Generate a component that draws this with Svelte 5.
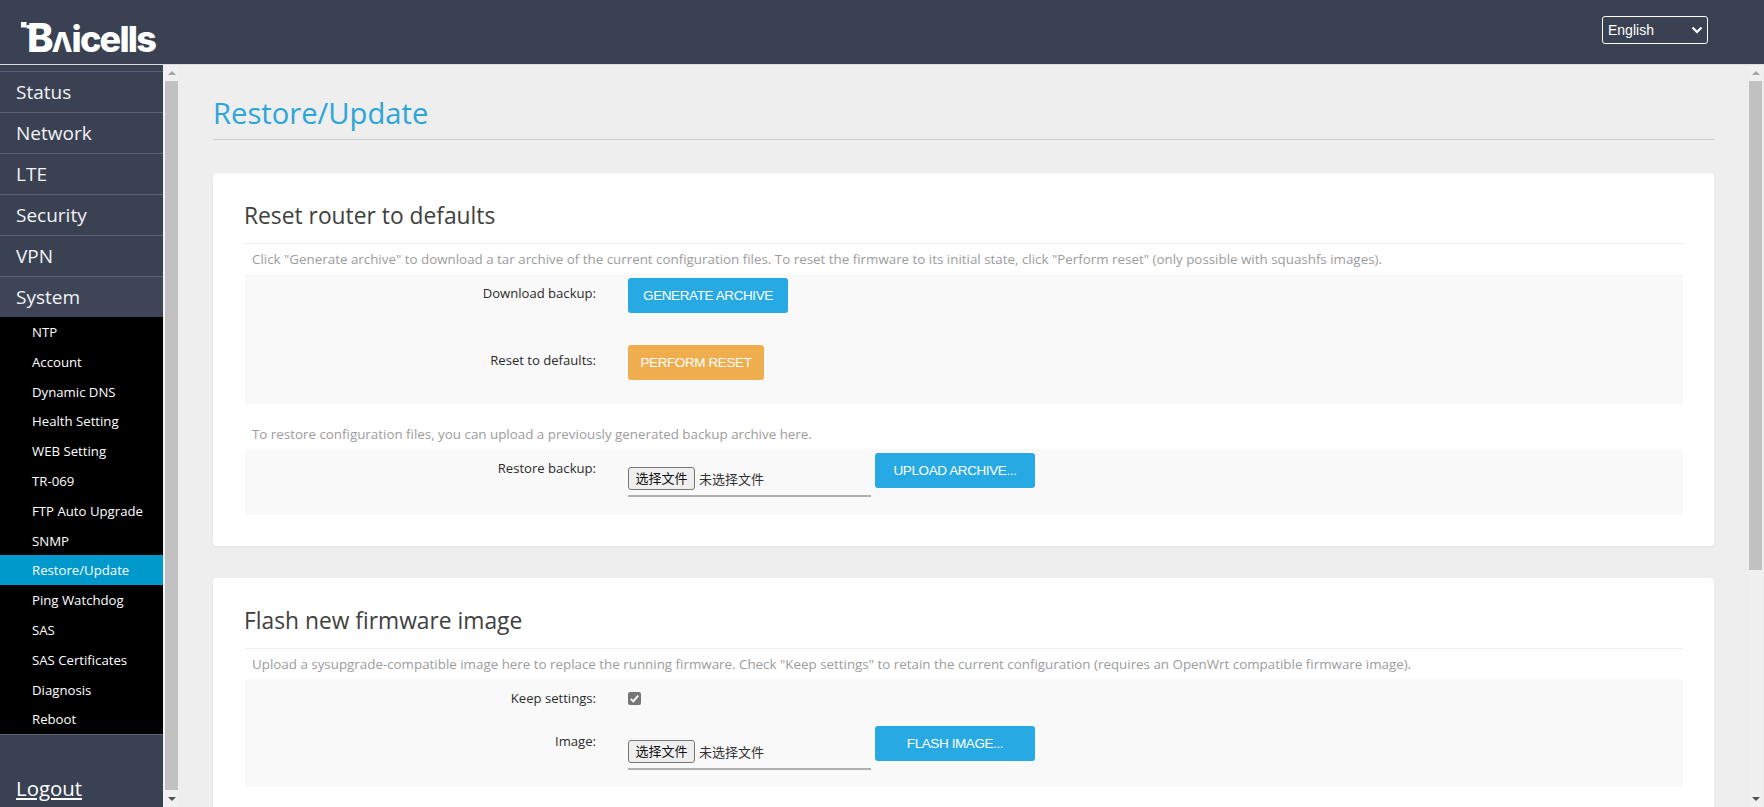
<script>
	const mainNav = ['Status', 'Network', 'LTE', 'Security', 'VPN', 'System']
	const subNav = [
		'NTP',
		'Account',
		'Dynamic DNS',
		'Health Setting',
		'WEB Setting',
		'TR-069',
		'FTP Auto Upgrade',
		'SNMP',
		'Restore/Update',
		'Ping Watchdog',
		'SAS',
		'SAS Certificates',
		'Diagnosis',
		'Reboot'
	]
</script>

<div class="page">
	<header>
		<div class="logo">
			<svg class="logo-dots" width="10" height="7" viewBox="0 0 10 7" aria-hidden="true">
				<rect x="0" y="0" width="5.5" height="5.5" />
				<rect x="5.5" y="3" width="4" height="3.5" />
			</svg>
			<span><span class="logo-b">B</span><span class="logo-a">Λ</span>icells</span>
		</div>
		<div class="lang">
			<span>English</span>
			<svg width="12" height="8" viewBox="0 0 12 8" aria-hidden="true">
				<path d="M1.5 1.5 6 6l4.5-4.5" fill="none" stroke="#fff" stroke-width="2.2" />
			</svg>
		</div>
	</header>

	<div class="body">
		<aside>
			<nav>
				{#each mainNav as item}
					<a href="#top" class="top" class:open={item === 'System'}>{item}</a>
				{/each}
				<div class="sub">
					{#each subNav as item}
						<a href="#top" class:active={item === 'Restore/Update'}>{item}</a>
					{/each}
				</div>
			</nav>
			<a href="#top" class="logout">Logout</a>
		</aside>
		<div class="gutter"></div>
		<div class="scrollbar">
			<span class="up"></span>
			<span class="thumb side"></span>
			<span class="down"></span>
		</div>

		<main>
			<h1>Restore/Update</h1>

			<section class="card first">
				<h2>Reset router to defaults</h2>
				<p class="desc">Click "Generate archive" to download a tar archive of the current configuration files. To reset the firmware to its initial state, click "Perform reset" (only possible with squashfs images).</p>
				<div class="fields tall">
					<div class="row spaced">
						<span class="label">Download backup:</span>
						<button class="btn blue wide">GENERATE ARCHIVE</button>
					</div>
					<div class="row">
						<span class="label">Reset to defaults:</span>
						<button class="btn orange">PERFORM RESET</button>
					</div>
				</div>
				<p class="desc second">To restore configuration files, you can upload a previously generated backup archive here.</p>
				<div class="fields">
					<div class="row">
						<span class="label">Restore backup:</span>
						<div class="file">
							<span class="file-btn">选择文件</span>
							<span class="file-name">未选择文件</span>
						</div>
						<button class="btn blue wide after-file">UPLOAD ARCHIVE...</button>
					</div>
				</div>
			</section>

			<section class="card">
				<h2>Flash new firmware image</h2>
				<p class="desc">Upload a sysupgrade-compatible image here to replace the running firmware. Check "Keep settings" to retain the current configuration (requires an OpenWrt compatible firmware image).</p>
				<div class="fields flash">
					<div class="row check-row">
						<span class="label">Keep settings:</span>
						<span class="check">
							<svg width="13" height="13" viewBox="0 0 13 13" aria-hidden="true">
								<path d="M2.8 6.8 5.3 9.3 10.2 3.6" fill="none" stroke="#fff" stroke-width="1.9" />
							</svg>
						</span>
					</div>
					<div class="row">
						<span class="label">Image:</span>
						<div class="file">
							<span class="file-btn">选择文件</span>
							<span class="file-name">未选择文件</span>
						</div>
						<button class="btn blue wide after-file">FLASH IMAGE...</button>
					</div>
				</div>
			</section>
		</main>

		<div class="scrollbar">
			<span class="up"></span>
			<span class="thumb"></span>
			<span class="down"></span>
		</div>
		<div class="edge"></div>
	</div>
</div>

<style>
	:global(body) {
		margin: 0;
		overflow: hidden;
	}
	.page {
		width: 1764px;
		height: 807px;
		display: flex;
		flex-direction: column;
		overflow: hidden;
		font-family: 'Open Sans', 'Noto Sans CJK SC', sans-serif;
	}
	header {
		flex: none;
		height: 65px;
		box-sizing: border-box;
		background: #3a4152;
		border-bottom: 1px solid #d9dce0;
		display: flex;
		align-items: flex-start;
		justify-content: space-between;
		padding: 16px 56px 0 21px;
	}
	.logo {
		position: relative;
		margin-top: 2px;
		color: #fff;
		font-family: 'Inter', sans-serif;
		font-weight: 800;
		font-size: 36px;
		line-height: 42px;
		letter-spacing: -1.8px;
		padding-left: 6px;
	}
	.logo-b {
		font-size: 40px;
		line-height: 0;
	}
	.logo-a {
		font-size: 27px;
		letter-spacing: -1px;
		line-height: 0;
	}
	.logo-dots {
		position: absolute;
		left: 0;
		top: 4px;
		fill: #fff;
	}
	.lang {
		width: 106px;
		height: 28px;
		box-sizing: border-box;
		border: 1px solid #fff;
		border-radius: 3px;
		display: flex;
		align-items: center;
		justify-content: space-between;
		padding: 0 4px 0 5px;
		color: #fff;
		font-family: 'Liberation Sans', sans-serif;
		font-size: 14px;
	}
	.body {
		flex: 1;
		min-height: 0;
		display: flex;
		background: #eee;
	}
	aside {
		flex: none;
		width: 163px;
		background: #3a4152;
		display: flex;
		flex-direction: column;
		padding-top: 6px;
		box-sizing: border-box;
	}
	.top {
		display: block;
		height: 40px;
		line-height: 40px;
		border-top: 1px solid #5b6272;
		padding-left: 16px;
		color: #f2f3f5;
		font-size: 19px;
		text-decoration: none;
	}
	.top.open {
		background: #3e4557;
	}
	.sub {
		background: #000;
		border-bottom: 1px solid #5b6272;
	}
	.sub a {
		display: block;
		height: 29.8px;
		line-height: 31px;
		padding-left: 32px;
		color: #fff;
		font-size: 13.2px;
		text-decoration: none;
	}
	.sub a.active {
		background: #0099cc;
	}
	.logout {
		margin-top: auto;
		margin-bottom: 4px;
		padding-left: 16px;
		color: #fff;
		font-size: 20.4px;
		line-height: 30px;
	}
	.gutter {
		flex: none;
		width: 2px;
		background: #f2f2f2;
	}
	.scrollbar {
		flex: none;
		width: 13px;
		background: #f0f0f0;
		display: flex;
		flex-direction: column;
		align-items: center;
		position: relative;
	}
	.edge {
		flex: none;
		width: 2px;
	}
	.up,
	.down {
		flex: none;
		height: 0;
		width: 0;
		border-left: 4px solid transparent;
		border-right: 4px solid transparent;
	}
	.up {
		margin-top: 6px;
		border-bottom: 4px solid #a5a5a5;
	}
	.down {
		margin-top: auto;
		margin-bottom: 6px;
		border-top: 4px solid #505050;
	}
	.thumb {
		margin-top: 6px;
		width: 13px;
		height: 489px;
		background: #c1c1c1;
	}
	.thumb.side {
		height: 709px;
	}
	main {
		flex: 1;
		min-width: 0;
		box-sizing: border-box;
		padding: 0 35px;
		overflow: hidden;
	}
	h1 {
		margin: 0 0 33px;
		height: 74px;
		line-height: 97px;
		box-sizing: content-box;
		border-bottom: 1px solid #ccc;
		font-size: 29.2px;
		font-weight: 400;
		color: #2ca5d9;
	}
	.card {
		background: #fff;
		border-radius: 4px;
		padding: 0 31px 0 32px;
		box-shadow: 0 1px 3px rgba(0, 0, 0, 0.05);
		height: 400px;
	}
	.card.first {
		height: 373px;
		margin-bottom: 32px;
	}
	h2 {
		margin: 0;
		height: 71px;
		line-height: 86px;
		box-sizing: border-box;
		border-bottom: 1px solid #eee;
		font-size: 22.8px;
		font-weight: 400;
		color: #404040;
		text-indent: -1px;
	}
	.desc {
		margin: 0;
		height: 30px;
		line-height: 31px;
		padding-left: 7px;
		font-size: 13.36px;
		color: #9c9c9c;
	}
	.desc.second {
		height: 45px;
		line-height: 60px;
	}
	.fields {
		background: #f9f9f9;
		padding-top: 4px;
		height: 66px;
		box-sizing: border-box;
	}
	.fields.tall {
		height: 130px;
	}
	.fields.flash {
		height: 108px;
	}
	.row {
		display: flex;
		align-items: flex-start;
		height: 35px;
	}
	.row.spaced {
		margin-bottom: 32px;
	}
	.row.check-row {
		height: 43px;
	}
	.label {
		flex: none;
		width: 351px;
		margin-right: 32px;
		text-align: right;
		font-size: 13.1px;
		line-height: 31px;
		color: #2b2b2b;
	}
	.check-row .label {
		line-height: 30px;
	}
	.btn {
		flex: none;
		height: 35px;
		box-sizing: border-box;
		padding: 0 8px;
		border: none;
		border-radius: 3px;
		color: #fff;
		font-family: 'Liberation Sans', sans-serif;
		font-size: 13.5px;
		letter-spacing: -0.4px;
	}
	.btn.wide {
		width: 160px;
	}
	.btn.after-file {
		margin-left: 4px;
	}
	.blue {
		background: #27a9e3;
	}
	.orange {
		background: #f0ad4e;
		padding: 0 12px;
		width: 136px;
	}
	.file {
		flex: none;
		width: 243px;
		height: 28px;
		margin-top: 14px;
		border-bottom: 2px solid #b0b0b0;
		display: flex;
		align-items: flex-start;
		font-size: 13px;
		color: #333;
	}
	.file-btn {
		box-sizing: border-box;
		width: 67px;
		height: 23px;
		line-height: 21px;
		text-align: center;
		background: #efefef;
		border: 1px solid #767676;
		border-radius: 3px;
		color: #111;
	}
	.file-name {
		margin-left: 4px;
		line-height: 24px;
	}
	.check {
		display: flex;
		width: 13px;
		height: 13px;
		margin-top: 9px;
		border-radius: 2px;
		background: #767676;
	}
</style>
